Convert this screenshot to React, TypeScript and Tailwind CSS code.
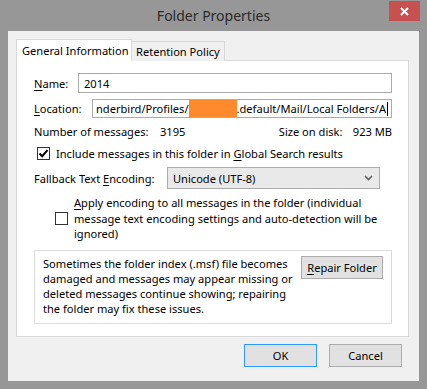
import React from "react";

function U({ children }: { children: React.ReactNode }) {
  return <span className="underline underline-offset-2">{children}</span>;
}

function CheckBox({ checked }: { checked: boolean }) {
  return (
    <span className="flex h-[13px] w-[13px] shrink-0 items-center justify-center border border-[#333] bg-white">
      {checked && (
        <svg width="11" height="11" viewBox="0 0 11 11">
          <path d="M1.5 5.5 L4.2 8.2 L9.5 2.2" fill="none" stroke="#000" strokeWidth="2" />
        </svg>
      )}
    </span>
  );
}

export default function App() {
  return (
    <div
      className="flex h-[389px] w-[427px] flex-col overflow-hidden bg-[#979797] text-[11.1px] leading-[15px] text-black"
      style={{ fontFamily: '"Segoe UI", "Noto Sans", sans-serif' }}
    >
      {/* title bar */}
      <div className="relative flex h-[31px] shrink-0 items-center justify-center">
        <span className="text-[14px] text-[#2b2b2b]">Folder Properties</span>
        <div className="absolute right-[7px] top-[1px] flex h-[20px] w-[31px] items-center justify-center bg-[#c75050]">
          <svg width="9" height="9" viewBox="0 0 9 9">
            <path d="M1 1 L8 8 M8 1 L1 8" stroke="#fff" strokeWidth="2" />
          </svg>
        </div>
      </div>

      {/* client */}
      <div className="mx-[8px] mb-[8px] flex flex-1 flex-col bg-[#f0f0f0] pl-[8px] pr-[10px] pt-[8px]">
        {/* tabs */}
        <div className="relative z-10 flex h-[22px] items-start whitespace-nowrap">
          <div className="flex h-[22px] w-[116px] items-center border border-b-0 border-[#d9d9d9] bg-white pl-[5px]">
            General Information
          </div>
          <div className="mt-[2px] flex h-[20px] w-[93px] items-center border border-b-0 border-l-0 border-[#d9d9d9] bg-[#f0f0f0] pl-[4px]">
            Retention Policy
          </div>
        </div>

        {/* panel */}
        <div className="-mt-px flex h-[277px] flex-col border border-[#d9d9d9] bg-white pl-[17px] pr-[16px] pt-[12px]">
          <div className="flex h-[20px] items-center">
            <span className="w-[44px]">
              <U>N</U>ame:
            </span>
            <div className="flex h-[20px] flex-1 items-center border border-[#ababab] pl-[5px]">2014</div>
          </div>

          <div className="mt-[6px] flex h-[19px] items-center">
            <span className="w-[58px]">
              <U>L</U>ocation:
            </span>
            <div className="flex h-[19px] flex-1 items-center overflow-hidden whitespace-nowrap border border-[#ababab] pl-[3px]">
              <span>nderbird/Profiles/</span>
              <span className="h-[17px] w-[48px] shrink-0 bg-[#ff8a2b]" />
              <span>.default/Mail/Local Folders/A</span>
              <span className="ml-px h-[14px] w-px shrink-0 bg-black" />
            </div>
          </div>

          <div className="mt-[6px] flex h-[15px] items-center justify-between">
            <div className="flex">
              <span className="w-[126px]">Number of messages:</span>
              <span>3195</span>
            </div>
            <div className="flex">
              <span className="w-[74px]">Size on disk:</span>
              <span>923 MB</span>
            </div>
          </div>

          <div className="mt-[7px] flex h-[15px] items-center pl-[3px]">
            <CheckBox checked />
            <span className="ml-[6px]">
              Include messages in this folder in <U>G</U>lobal Search results
            </span>
          </div>

          <div className="mt-[6px] flex h-[22px] items-center">
            <span className="w-[133px]">
              Fallback Text <U>E</U>ncoding:
            </span>
            <div className="flex h-[22px] w-[213px] items-center justify-between border border-[#acacac] bg-[#e9e9e9] pl-[5px] pr-[6px]">
              <span>Unicode (UTF-8)</span>
              <svg width="9" height="6" viewBox="0 0 9 6">
                <path d="M1 1 L4.5 4.5 L8 1" fill="none" stroke="#606060" strokeWidth="1.6" />
              </svg>
            </div>
          </div>

          <div className="mt-[6px] flex items-center pl-[21px]">
            <CheckBox checked={false} />
            <span className="ml-[6px] w-[305px] leading-[15.5px]">
              <U>A</U>pply encoding to all messages in the folder (individual message text encoding settings
              and auto-detection will be ignored)
            </span>
          </div>

          <div className="mt-[8px] flex h-[74px] border border-[#dcdcdc] pl-[8px] pr-[8px] pt-[5px]">
            <p className="w-[258px]">
              Sometimes the folder index (.msf) file becomes damaged and messages may appear missing or deleted
              messages continue showing; repairing the folder may fix these issues.
            </p>
            <div className="ml-auto flex h-[23px] w-[82px] items-center justify-center border border-[#adadad] bg-[#e1e1e1]">
              <span>
                <U>R</U>epair Folder
              </span>
            </div>
          </div>
        </div>

        {/* buttons */}
        <div className="mt-[7px] flex justify-end gap-[12px] pr-[7px]">
          <div className="flex h-[23px] w-[73px] items-center justify-center border border-[#3399ff] bg-[#e1e1e1]">
            OK
          </div>
          <div className="flex h-[23px] w-[73px] items-center justify-center border border-[#adadad] bg-[#e1e1e1]">
            Cancel
          </div>
        </div>
      </div>
    </div>
  );
}
